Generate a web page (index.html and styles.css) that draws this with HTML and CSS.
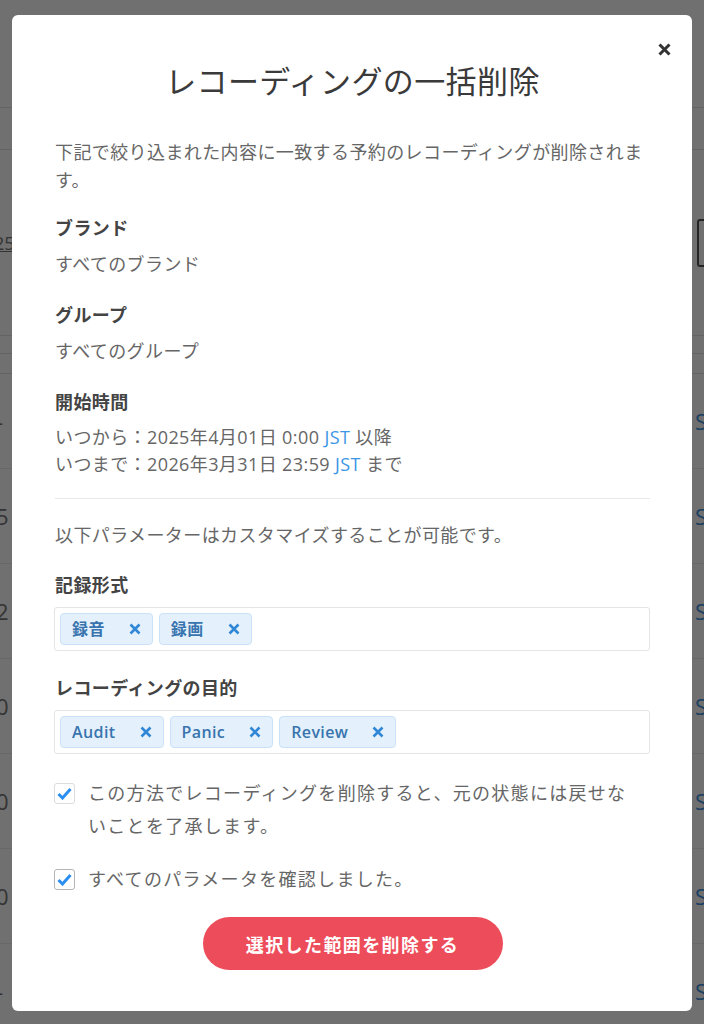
FILE: index.html
```html
<!DOCTYPE html>
<html lang="ja">
<head>
<meta charset="utf-8">
<title>レコーディングの一括削除</title>
<link rel="stylesheet" href="styles.css">
</head>
<body>
<div class="page">
  <div class="bg-top"></div>
  <div class="bg-line"></div>
  <div class="bg-filter">
    <span class="bg-date">25</span>
    <span class="bg-input"></span>
  </div>
  <div class="bg-line2"></div>
  <div class="bg-head"></div>
  <div class="bg-rows">
    <div class="bg-row"><span class="bg-l">-</span><span class="bg-r">S</span></div>
    <div class="bg-row"><span class="bg-l">5</span><span class="bg-r">S</span></div>
    <div class="bg-row"><span class="bg-l">2</span><span class="bg-r">S</span></div>
    <div class="bg-row"><span class="bg-l">0</span><span class="bg-r">S</span></div>
    <div class="bg-row"><span class="bg-l">0</span><span class="bg-r">S</span></div>
    <div class="bg-row"><span class="bg-l">0</span><span class="bg-r">S</span></div>
    <div class="bg-row"><span class="bg-l">-</span><span class="bg-r">S</span></div>
  </div>
</div>

<div class="overlay">
  <div class="modal">
    <button class="close" aria-label="閉じる">
      <svg width="13" height="13" viewBox="0 0 13 13"><path d="M1.5 1.5 L11.5 11.5 M11.5 1.5 L1.5 11.5" stroke="#333" stroke-width="3" stroke-linecap="butt" fill="none"/></svg>
    </button>
    <h1 class="title">レコーディングの一括削除</h1>
    <p class="desc">下記で絞り込まれた内容に一致する予約のレコーディングが削除されます。</p>

    <section class="field">
      <h3 class="label">ブランド</h3>
      <p class="value">すべてのブランド</p>
    </section>
    <section class="field">
      <h3 class="label">グループ</h3>
      <p class="value">すべてのグループ</p>
    </section>
    <section class="field time">
      <h3 class="label">開始時間</h3>
      <p class="value">いつから：2025年4月01日 0:00 <span class="tz">JST</span> 以降</p>
      <p class="value">いつまで：2026年3月31日 23:59 <span class="tz">JST</span> まで</p>
    </section>

    <hr class="divider">

    <p class="note">以下パラメーターはカスタマイズすることが可能です。</p>

    <section class="field select-field">
      <h3 class="label">記録形式</h3>
      <div class="tagbox">
        <span class="tag"><span class="tag-text">録音</span><svg class="tag-x" width="12" height="12" viewBox="0 0 12 12"><path d="M1.5 1.5 L10.5 10.5 M10.5 1.5 L1.5 10.5" stroke="#2f87d6" stroke-width="2.6" fill="none"/></svg></span>
        <span class="tag"><span class="tag-text">録画</span><svg class="tag-x" width="12" height="12" viewBox="0 0 12 12"><path d="M1.5 1.5 L10.5 10.5 M10.5 1.5 L1.5 10.5" stroke="#2f87d6" stroke-width="2.6" fill="none"/></svg></span>
      </div>
    </section>
    <section class="field select-field">
      <h3 class="label">レコーディングの目的</h3>
      <div class="tagbox">
        <span class="tag"><span class="tag-text">Audit</span><svg class="tag-x" width="12" height="12" viewBox="0 0 12 12"><path d="M1.5 1.5 L10.5 10.5 M10.5 1.5 L1.5 10.5" stroke="#2f87d6" stroke-width="2.6" fill="none"/></svg></span>
        <span class="tag"><span class="tag-text">Panic</span><svg class="tag-x" width="12" height="12" viewBox="0 0 12 12"><path d="M1.5 1.5 L10.5 10.5 M10.5 1.5 L1.5 10.5" stroke="#2f87d6" stroke-width="2.6" fill="none"/></svg></span>
        <span class="tag"><span class="tag-text">Review</span><svg class="tag-x" width="12" height="12" viewBox="0 0 12 12"><path d="M1.5 1.5 L10.5 10.5 M10.5 1.5 L1.5 10.5" stroke="#2f87d6" stroke-width="2.6" fill="none"/></svg></span>
      </div>
    </section>

    <label class="check">
      <span class="box"><svg width="15" height="13" viewBox="0 0 15 13"><path d="M1.5 7 L5.5 11 L13.5 2" stroke="#2b8ef0" stroke-width="3" fill="none" stroke-linejoin="miter"/></svg></span>
      <span class="check-text">この方法でレコーディングを削除すると、元の状態には戻せないことを了承します。</span>
    </label>
    <label class="check">
      <span class="box box-dark"><svg width="15" height="13" viewBox="0 0 15 13"><path d="M1.5 7 L5.5 11 L13.5 2" stroke="#2b8ef0" stroke-width="3" fill="none" stroke-linejoin="miter"/></svg></span>
      <span class="check-text">すべてのパラメータを確認しました。</span>
    </label>

    <div class="actions">
      <button class="danger">選択した範囲を削除する</button>
    </div>
  </div>
</div>
</body>
</html>
```

FILE: styles.css
```css
* { box-sizing: border-box; }

html, body {
  margin: 0;
  padding: 0;
  width: 704px;
  height: 1024px;
  overflow: hidden;
  background: #fff;
  font-family: "Open Sans", "Noto Sans CJK JP", sans-serif;
}

/* background page (under the overlay) */
.page {
  width: 704px;
  height: 1024px;
  overflow: hidden;
  color: #888;
}
.bg-top { height: 108px; border-bottom: 1px solid #e2e2e2; }
.bg-line { height: 42px; border-bottom: 1px solid #e2e2e2; }
.bg-filter {
  height: 186px;
  display: flex;
  justify-content: space-between;
  align-items: center;
  border-bottom: 1px solid #e2e2e2;
}
.bg-date {
  margin-left: -6px;
  font-size: 18px;
  color: #777;
  text-decoration: underline;
}
.bg-input {
  width: 40px;
  height: 48px;
  margin-right: -33px;
  border: 2px solid #555;
  border-radius: 3px;
}
.bg-line2 { height: 18px; border-bottom: 1px solid #e2e2e2; }
.bg-head { height: 20px; border-bottom: 1px solid #e2e2e2; }
.bg-rows { display: flex; flex-direction: column; }
.bg-row {
  height: 95px;
  display: flex;
  justify-content: space-between;
  align-items: center;
  border-bottom: 1px solid #ececec;
}
.bg-l {
  margin-left: -4px;
  font-size: 22px;
  color: #777;
}
.bg-r {
  margin-right: -3px;
  font-size: 22px;
  color: #3b8fe0;
}

/* overlay + modal */
.overlay {
  position: fixed;
  inset: 0;
  background: rgba(0, 0, 0, 0.56);
  display: flex;
  justify-content: center;
  align-items: flex-start;
  padding-top: 15px;
}
.modal {
  position: relative;
  width: 680px;
  background: #fff;
  border-radius: 6px;
  padding: 46px 42px 41px 43px;
  color: #666;
  font-size: 18px;
  line-height: 28px;
  letter-spacing: 0.4px;
}
.close {
  position: absolute;
  top: 27px;
  right: 20px;
  width: 15px;
  height: 15px;
  padding: 0;
  border: 0;
  background: none;
  display: flex;
  align-items: center;
  justify-content: center;
  cursor: pointer;
}
.title {
  margin: 0 0 37px;
  text-align: center;
  font-size: 31px;
  line-height: 40px;
  font-weight: 400;
  letter-spacing: 0.4px;
  color: #3a3a3a;
}
.desc { margin: 0 0 20px; }

.field { margin: 0 0 23px; }
.label {
  margin: 0 0 8px;
  font-size: 18px;
  line-height: 28px;
  font-weight: 700;
  color: #444;
}
.value { margin: 0; }
.time { margin-bottom: 0; }
.time .value { line-height: 27px; }
.tz { color: #3a96e6; }

.divider {
  margin: 20px 0 0;
  border: 0;
  border-top: 1px solid #e8e8e8;
  height: 0;
}
.note { margin: 22px 0 22px; }

.select-field { margin-bottom: 23px; }
.tagbox {
  margin-left: -1px;
  display: flex;
  gap: 6px;
  padding: 5px;
  border: 1px solid #e5e5e5;
  border-radius: 3px;
}
.tag {
  height: 32px;
  display: inline-flex;
  align-items: center;
  padding: 0 11px 0 11px;
  background: #e4f1fc;
  border: 1px solid #c9e2f8;
  border-radius: 4px;
  color: #3874ae;
  font-size: 16px;
  font-weight: 600;
  letter-spacing: 0.4px;
}
.tag-text { margin-right: 24px; }
.tag-x { display: block; }

.check {
  display: flex;
  align-items: flex-start;
  gap: 13px;
  margin: 4px 0 20px -1px;
  line-height: 33px;
  letter-spacing: 1.3px;
  cursor: pointer;
}
.check-text { padding-right: 10px; }
.box {
  flex: none;
  width: 21px;
  height: 21px;
  margin-top: 6px;
  border: 1px solid #dcdcdc;
  border-radius: 3px;
  background: #fff;
  display: flex;
  align-items: center;
  justify-content: center;
}
.box-dark { border-color: #b5b5b5; }

.actions {
  display: flex;
  justify-content: center;
  padding-top: 1px;
}
.danger {
  width: 300px;
  height: 53px;
  border: 0;
  border-radius: 27px;
  background: #ed4c5a;
  color: #fff;
  font-family: "Open Sans", "Noto Sans CJK JP", sans-serif;
  font-size: 18px;
  font-weight: 700;
  letter-spacing: 1.4px;
  cursor: pointer;
}
```
